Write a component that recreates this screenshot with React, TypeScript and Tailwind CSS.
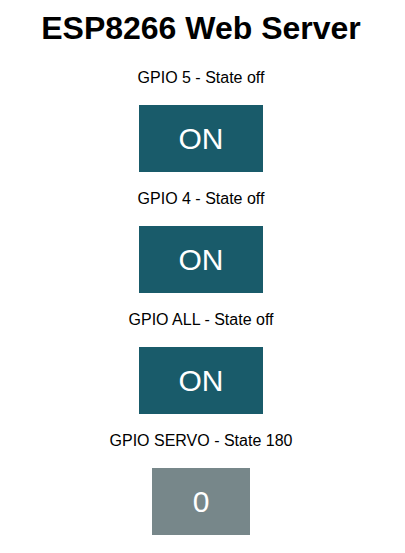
const rows = [
  { label: "GPIO 5 - State off", text: "ON", servo: false },
  { label: "GPIO 4 - State off", text: "ON", servo: false },
  { label: "GPIO ALL - State off", text: "ON", servo: false },
  { label: "GPIO SERVO - State 180", text: "0", servo: true },
];

export default function App() {
  return (
    <div className="flex min-h-screen flex-col items-center bg-white pt-[10px] pr-[3px] text-black [font-family:'Liberation_Sans',Arial,sans-serif]">
      <h1 className="text-[32px] font-bold leading-[37px]">ESP8266 Web Server</h1>
      <div className="mt-[21px] flex flex-col items-center">
        {rows.map((row, i) => (
          <div key={row.label} className={`flex flex-col items-center ${i > 0 ? "mt-[17px]" : ""}`}>
            <p className="text-[16px] leading-[19px]">{row.label}</p>
            <button
              className={
                row.servo
                  ? "mt-[18px] flex h-[67px] w-[98px] items-center justify-center bg-[#77878A] text-[30px] text-white"
                  : "mt-[18px] flex h-[67px] w-[124px] items-center justify-center bg-[#195B6A] text-[30px] text-white"
              }
            >
              {row.text}
            </button>
          </div>
        ))}
      </div>
    </div>
  );
}
